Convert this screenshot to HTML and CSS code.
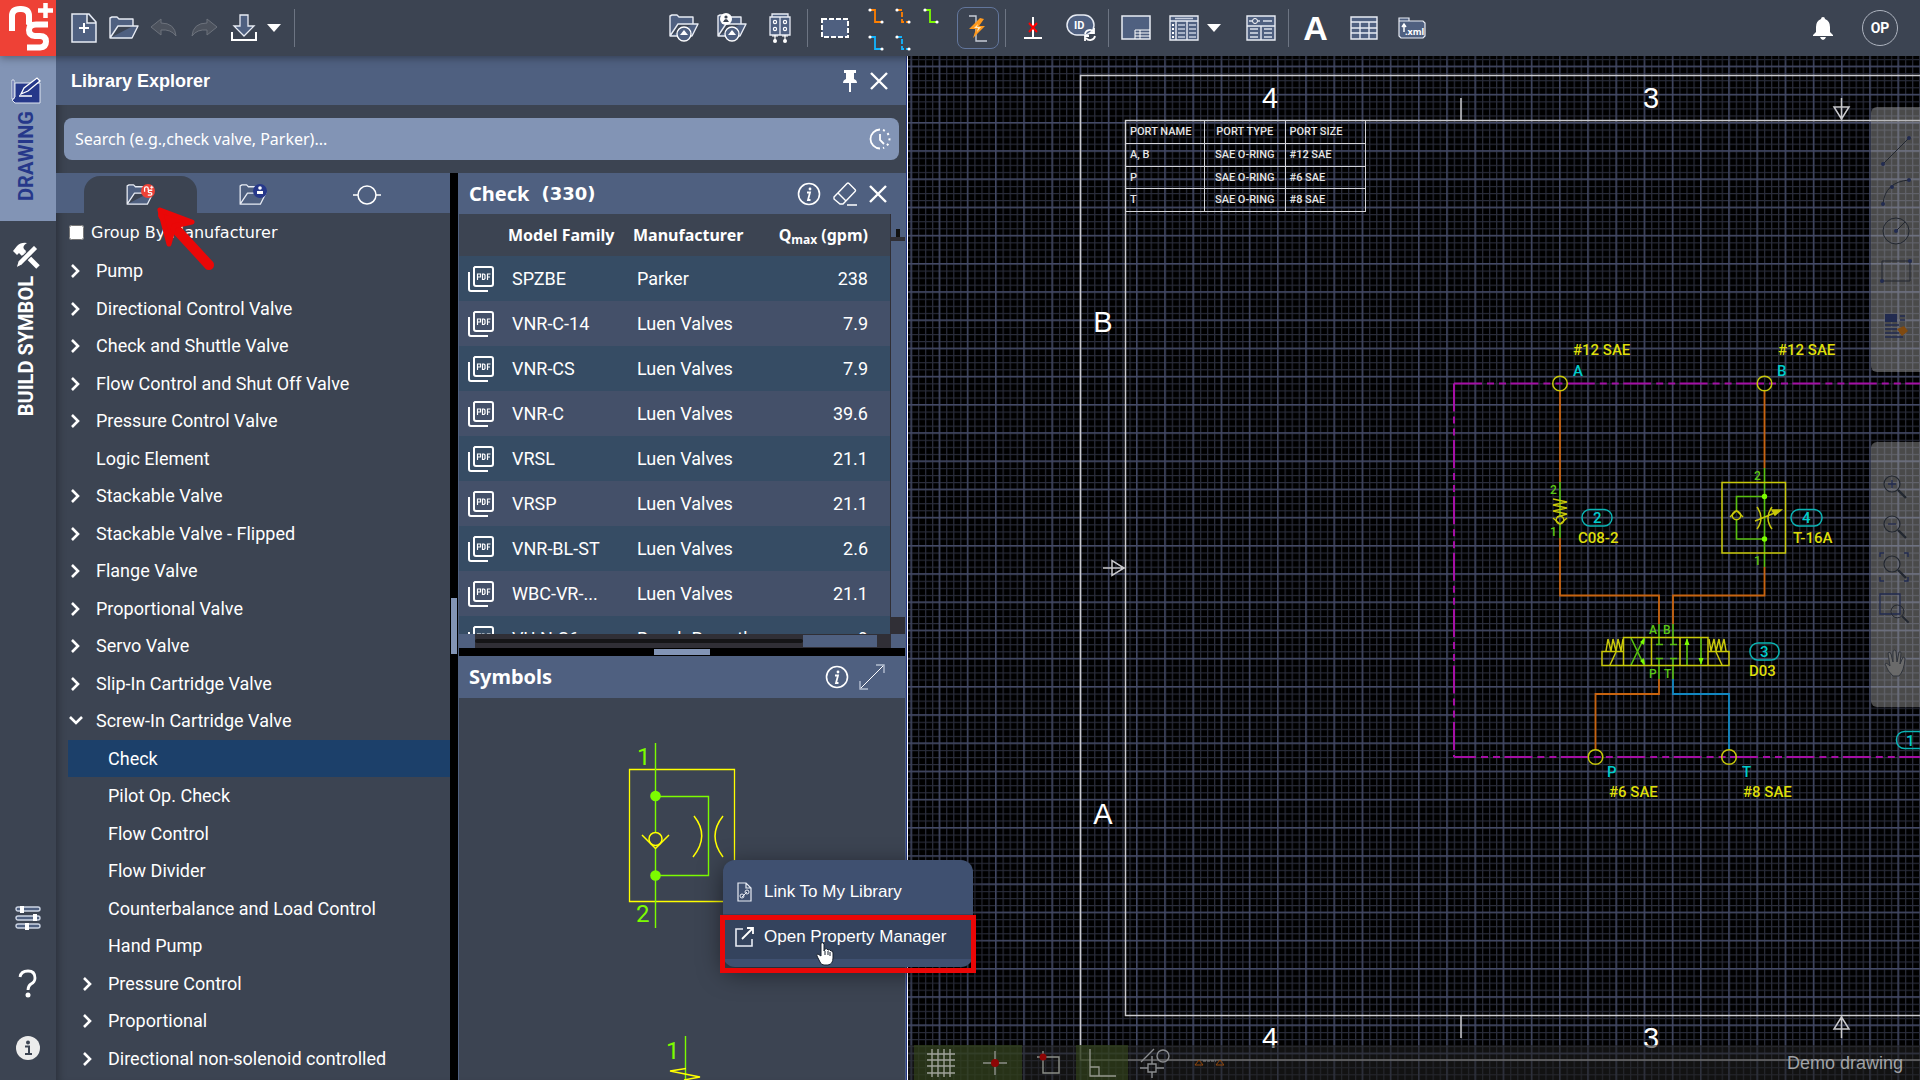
FILE: index.html
```html
<!DOCTYPE html>
<html lang="en">
<head>
<meta charset="utf-8">
<title>Library Explorer</title>
<link rel="stylesheet" href="styles.css">
</head>
<body>
<svg class="defs" aria-hidden="true">
  <symbol id="folder" viewBox="0 0 30 24"><path d="M1 22V2l2-1h5l2 2h14v7H9L1 22h22l6-12h-5" fill="#4f6080" stroke="#e8ecf4" stroke-width="1.4" stroke-linejoin="round"/></symbol>
  <symbol id="chev" viewBox="0 0 10 16"><path d="M1 2l6 6-6 6" fill="none" stroke="#fff" stroke-width="2.6"/></symbol>
  <symbol id="chevdown" viewBox="0 0 16 10"><path d="M2 1l6 6 6-6" fill="none" stroke="#fff" stroke-width="2.6"/></symbol>
  <symbol id="close" viewBox="0 0 18 18"><path d="M1 1l16 16M17 1L1 17" stroke="#fff" stroke-width="2.4"/></symbol>
  <symbol id="info" viewBox="0 0 24 24"><circle cx="12" cy="12" r="10.5" fill="none" stroke="#fff" stroke-width="1.6"/><circle cx="13" cy="7" r="1.4" fill="#fff"/><path d="M10 10.500h3l-2 7.500h2.500" fill="none" stroke="#fff" stroke-width="1.800"/></symbol>
  <symbol id="pdf" viewBox="0 0 26 26"><path d="M7 1h16q2 0 2 2v15q0 2-2 2H8q-2 0-2-2V2zM1 6v17q0 2 2 2h17" fill="none" stroke="#fff" stroke-width="2"/><path d="M9.500 14V8h3v3h-3M14.500 8v5.500h1.500l1-1V9l-1-1zM19.500 14V8h3M19.500 11h2.500" fill="none" stroke="#fff" stroke-width="1.200"/></symbol>
  <symbol id="caret" viewBox="0 0 14 8"><path d="M0 0h14L7 8z" fill="#fff"/></symbol>
  <symbol id="ns" viewBox="0 0 56 56"><g fill="none" stroke="#fff" stroke-width="6"><path d="M12 31V16q0-7 8-7h1q8 0 8 7v7q0 2-1 3"/><path d="M48 24.500H36q-7 0-7 5.500t6 6h5q6 0 6 5.500t-6 6H27"/><path d="M45.500 3v15M38 10.500h15" stroke-width="4.500"/></g></symbol>
  <symbol id="lens" viewBox="0 0 30 30"><circle cx="13" cy="13" r="8" fill="none" stroke="#222730" stroke-width="1.200"/><path d="M19 19l8 8" stroke="#222730" stroke-width="2.400"/></symbol>
</svg>

<header class="topbar">
  <a class="logo" href="#" aria-label="Home"><svg width="56" height="56"><use href="#ns"/></svg></a>
  <div class="tools">
    <div class="group">
      <button class="tool" aria-label="New"><svg width="26" height="32"><path d="M1 2h17l7 8v20H1zM16 2v9h9" fill="#4f6080" stroke="#e8ecf4" stroke-width="1.500"/><path d="M13 11v10M8 16h10" stroke="#fff" stroke-width="2"/></svg></button>
      <button class="tool" aria-label="Open"><svg width="30" height="24"><use href="#folder"/></svg></button>
      <button class="tool" aria-label="Undo"><svg width="28" height="20"><path d="M1 9L11 1v4q14 0 15 13q-5-7-15-6v5z" fill="#4c525d" stroke="#6c727c"/></svg></button>
      <button class="tool" aria-label="Redo"><svg width="28" height="20"><path d="M27 9L17 1v4Q3 5 2 18q5-7 15-6v5z" fill="#4c525d" stroke="#6c727c"/></svg></button>
      <button class="tool" aria-label="Save"><svg width="26" height="28"><path d="M9 1h8v11h6L13 22 3 12h6z" fill="#4f6080" stroke="#e8ecf4" stroke-width="1.300"/><path d="M1 18v8h24v-8" fill="none" stroke="#fff" stroke-width="2"/></svg></button>
      <button class="drop" aria-label="Save options"><svg width="14" height="8"><use href="#caret"/></svg></button>
      <span class="sep"></span>
    </div>
    <div class="group center">
      <button class="tool wide" aria-label="Load library"><svg width="30" height="30"><use href="#folder" width="30" height="24" y="1"/><circle cx="15" cy="21" r="7" fill="#4f6080" stroke="#fff" stroke-width="1.300"/><path d="M11 22l4-5 4 5z" fill="#fff"/></svg></button>
      <button class="tool wide" aria-label="Load my library"><svg width="30" height="30"><use href="#folder" width="30" height="24" y="1"/><circle cx="9" cy="6" r="6" fill="#fff"/><circle cx="9" cy="4" r="1.600" fill="#3c4452"/><path d="M6 9q3-6 6 0z" fill="#3c4452"/><circle cx="15" cy="21" r="7" fill="#4f6080" stroke="#fff" stroke-width="1.300"/><path d="M11 22l4-5 4 5z" fill="#fff"/></svg></button>
      <button class="tool wide" aria-label="Manifold"><svg width="22" height="32"><path d="M1 5h20v18H1zM11 5v18M3 2h16v3H3z" fill="#4f6080" stroke="#e8ecf4" stroke-width="1.300"/><g fill="none" stroke="#fff" stroke-width="1.200"><circle cx="6" cy="10" r="1.600"/><circle cx="16" cy="10" r="1.600"/><circle cx="6" cy="17" r="1.600"/><circle cx="16" cy="17" r="1.600"/><path d="M3 24h6M13 24h6M6 23v7M16 23v7"/></g><circle cx="6" cy="29" r="2" fill="#fff"/><circle cx="16" cy="29" r="2" fill="#fff"/></svg></button>
      <span class="sep"></span>
      <button class="tool wide" aria-label="Select area"><svg width="28" height="20"><rect x="1" y="1" width="26" height="18" fill="#4f6080" stroke="#fff" stroke-width="2" stroke-dasharray="5 2"/></svg></button>
      <button class="wires" aria-label="Line types"><svg width="76" height="46" fill="none" stroke-width="1.800"><g stroke="#ff8000"><path d="M3 5h5v12h7"/><path d="M30 5h5v12h7" stroke-dasharray="5 2"/></g><path d="M58 5h5v12h7" stroke="#7cfc00"/><g stroke="#12b5ff"><path d="M3 32h5v12h7"/><path d="M30 32h5v12h7" stroke-dasharray="5 2"/></g><g fill="#fff"><circle cx="3" cy="5" r="1.600"/><circle cx="15" cy="17" r="1.600"/><circle cx="30" cy="5" r="1.600"/><circle cx="42" cy="17" r="1.600"/><circle cx="58" cy="5" r="1.600"/><circle cx="70" cy="17" r="1.600"/><circle cx="3" cy="32" r="1.600"/><circle cx="15" cy="44" r="1.600"/><circle cx="30" cy="32" r="1.600"/><circle cx="42" cy="44" r="1.600"/></g></svg></button>
      <button class="flash" aria-label="Auto route"><svg width="24" height="28"><path d="M3 2h7v25h11" fill="none" stroke="#c6ccd6" stroke-width="1.400"/><path d="M14 4L3 15h7L7 24l12-12h-6l5-7z" fill="#ff9a1e"/><path d="M12 10l-4 4h4l-1 4 4-5h-4z" fill="#ffe9c0"/></svg></button>
      <span class="sep"></span>
      <button class="tool wide" aria-label="Delete port"><svg width="20" height="24"><path d="M10 1v20M1 22h18" stroke="#fff" stroke-width="2"/><path d="M6 7l8 9M14 7l-8 9" stroke="#f00" stroke-width="2"/></svg></button>
      <button class="tool wide" aria-label="Update ID"><svg width="30" height="28"><rect x="1" y="1" width="27" height="20" rx="10" fill="#4f6080" stroke="#e8ecf4" stroke-width="1.500"/><text x="8" y="15" class="id">ID</text><path d="M19 20a5 5 0 0 1 9-2M29 22a5 5 0 0 1-9 2M28 14v5h-4M19 27v-5h4" fill="none" stroke="#fff" stroke-width="1.800"/></svg></button>
      <span class="sep"></span>
      <button class="tool wide" aria-label="Title block"><svg width="30" height="26"><path d="M1 1h28v23H1z" fill="#4f6080" stroke="#e8ecf4" stroke-width="1.500"/><path d="M14 24v-9h15M14 18h15M14 21h15M19 15v9" fill="none" stroke="#fff"/></svg></button>
      <button class="tool wide" aria-label="Bill of materials"><svg width="30" height="26"><path d="M1 1h28v24H1zM1 6h28M7 6v19M18 6v19" fill="#4f6080" stroke="#e8ecf4" stroke-width="1.400"/><path d="M6 3.500h18M9 10h7M9 14h7M9 18h7M9 22h7M20 10h7M20 14h7M20 18h7M20 22h7" stroke="#c5cddd" stroke-width="1.500"/><path d="M4 9v14" stroke="#fff" stroke-width="2" stroke-dasharray="2 2"/></svg></button>
      <button class="drop" aria-label="Bill options"><svg width="14" height="8"><use href="#caret"/></svg></button>
      <button class="tool form" aria-label="Properties"><svg width="30" height="26"><path d="M1 1h28v24H1zM1 11h28M15 11v14" fill="#4f6080" stroke="#e8ecf4" stroke-width="1.400"/><path d="M3 6h3M12 6h2M17 6h9M4 14h8M4 18h8M4 22h8M18 14h8M18 18h8M18 22h8" stroke="#dbe1ec" stroke-width="1.400"/><circle cx="9" cy="6" r="2.500" fill="none" stroke="#fff"/></svg></button>
      <span class="sep"></span>
      <button class="tool wide letter" aria-label="Text">A</button>
      <button class="tool wide" aria-label="Table"><svg width="28" height="24"><path d="M1 1h26v22H1zM1 6h26M1 12h26M1 17h26M10 6v17M19 6v17" fill="#4f6080" stroke="#e8ecf4" stroke-width="1.400"/></svg></button>
      <button class="tool wide" aria-label="XML"><svg width="28" height="22"><path d="M1 19V1h10v3h14l2 2v13l-2 2H3zM1 4h10" fill="#4f6080" stroke="#e8ecf4" stroke-width="1.200"/><path d="M6 15V8M4 10l2-3 2 3" stroke="#fff" fill="none" stroke-width="1.500"/><text x="7" y="18" class="xml">.xml</text></svg></button>
    </div>
    <div class="group account">
      <button class="tool" aria-label="Notifications"><svg width="22" height="24"><path d="M11 1q2 0 2 2q5 2 5 8v5l3 3v1H1v-1l3-3v-5q0-6 5-8q0-2 2-2zM8 21h6q-1 3-3 3t-3-3z" fill="#fff"/></svg></button>
      <button class="avatar">OP</button>
    </div>
  </div>
</header>

<div class="body">
  <nav class="rail">
    <a class="mode active" href="#"><svg width="32" height="28"><path d="M2 3h2v19H2zM5 6h25v20H5l-3-3 3-3z" fill="#26388a" stroke="#dfe5f2" stroke-width="1"/><path d="M11 17l3-6L27 1l3 3-12 10zM9 19h13" fill="#26388a" stroke="#fff" stroke-width="1.300"/></svg><span>DRAWING</span></a>
    <a class="mode" href="#"><svg width="28" height="28"><path d="M1 9l4-5q4-4 10-3q-5 3-3 6l2 2-4 5-3-3-2 2z" fill="#fff"/><path d="M12 11l14 14" stroke="#fff" stroke-width="5"/><path d="M4 26l2-7L22 3l4 4L10 23z" fill="#fff" stroke="#3c4452" stroke-width="1.200"/></svg><span>BUILD SYMBOL</span></a>
    <div class="railend">
      <button aria-label="Settings"><svg width="26" height="26"><g fill="#4f6080" stroke="#cdd5e4" stroke-width="1.400"><rect x="1" y="2" width="24" height="4" rx="2"/><rect x="1" y="11" width="24" height="4" rx="2"/><rect x="1" y="19" width="24" height="4" rx="2"/></g><path d="M7 1v7M20 9v7M12 18v7" stroke="#fff" stroke-width="4"/></svg></button>
      <button aria-label="Help"><svg width="20" height="30"><path d="M2 8q1-6 8-6 7 0 7 7 0 4-4 6-3 2-3 6" fill="none" stroke="#fff" stroke-width="2.800"/><circle cx="10" cy="26" r="2.500" fill="#fff"/></svg></button>
      <button aria-label="About"><svg width="24" height="24"><circle cx="12" cy="12" r="12" fill="#ececec"/><circle cx="12" cy="6.500" r="2" fill="#3c4452"/><path d="M9 10.500h4V18M9 18h7" fill="none" stroke="#3c4452" stroke-width="2"/></svg></button>
    </div>
  </nav>

  <section class="explorer">
    <div class="titlebar"><h1>Library Explorer</h1>
      <button aria-label="Pin"><svg width="16" height="22"><path d="M2 0h12v3h-2v6q3 1 3 4H1q0-3 3-4V3H2zM7 13h2v9H7z" fill="#fff"/></svg></button>
      <button aria-label="Close explorer"><svg width="18" height="18"><use href="#close"/></svg></button>
    </div>
    <div class="search"><input type="text" aria-label="Search library" placeholder="Search (e.g.,check valve, Parker)..."><button aria-label="Search history"><svg width="22" height="22"><path d="M11 1.500a9.500 9.500 0 0 0 0 19M11 6v6l4 4" fill="none" stroke="#fff" stroke-width="1.800"/><path d="M14 2a9.500 9.500 0 0 1 0 18" fill="none" stroke="#fff" stroke-width="2" stroke-dasharray="2 3.500"/></svg></button></div>
    <div class="split">
      <div class="left">
        <div class="tabs">
          <button class="tab on" aria-label="Library"><svg width="32" height="24"><use href="#folder" width="30" height="22" y="1"/><circle cx="23" cy="8" r="7" fill="#ee4136"/><use href="#ns" x="17" y="2" width="12" height="12"/></svg></button>
          <button class="tab" aria-label="My library"><svg width="32" height="24"><use href="#folder" width="30" height="22" y="1"/><circle cx="22" cy="8" r="7" fill="#26388a"/><circle cx="22" cy="5" r="1.800" fill="#fff"/><path d="M19 11V8h6v3z" fill="#fff"/></svg></button>
          <button class="tab" aria-label="Components"><svg width="30" height="20"><circle cx="15" cy="10" r="9" fill="none" stroke="#fff" stroke-width="1.500"/><path d="M1 10h5M24 10h5" stroke="#fff" stroke-width="1.500"/></svg></button>
        </div>
        <label class="groupby"><input type="checkbox"> Group By Manufacturer</label>
        <ul class="tree">
          <li><button><svg><use href="#chev"/></svg>Pump</button></li>
          <li><button><svg><use href="#chev"/></svg>Directional Control Valve</button></li>
          <li><button><svg><use href="#chev"/></svg>Check and Shuttle Valve</button></li>
          <li><button><svg><use href="#chev"/></svg>Flow Control and Shut Off Valve</button></li>
          <li><button><svg><use href="#chev"/></svg>Pressure Control Valve</button></li>
          <li><button><svg></svg>Logic Element</button></li>
          <li><button><svg><use href="#chev"/></svg>Stackable Valve</button></li>
          <li><button><svg><use href="#chev"/></svg>Stackable Valve - Flipped</button></li>
          <li><button><svg><use href="#chev"/></svg>Flange Valve</button></li>
          <li><button><svg><use href="#chev"/></svg>Proportional Valve</button></li>
          <li><button><svg><use href="#chev"/></svg>Servo Valve</button></li>
          <li><button><svg><use href="#chev"/></svg>Slip-In Cartridge Valve</button></li>
          <li><button><svg><use href="#chevdown"/></svg>Screw-In Cartridge Valve</button></li>
          <li class="sub picked"><button><svg></svg>Check</button></li>
          <li class="sub"><button><svg></svg>Pilot Op. Check</button></li>
          <li class="sub"><button><svg></svg>Flow Control</button></li>
          <li class="sub"><button><svg></svg>Flow Divider</button></li>
          <li class="sub"><button><svg></svg>Counterbalance and Load Control</button></li>
          <li class="sub"><button><svg></svg>Hand Pump</button></li>
          <li class="sub"><button><svg><use href="#chev"/></svg>Pressure Control</button></li>
          <li class="sub"><button><svg><use href="#chev"/></svg>Proportional</button></li>
          <li class="sub"><button><svg><use href="#chev"/></svg>Directional non-solenoid controlled</button></li>
        </ul>
      </div>
      <div class="vsplit"><i></i></div>
      <div class="right">
        <div class="subhead"><h2>Check</h2><b class="count">(330)</b>
          <button aria-label="Information"><svg width="24" height="24"><use href="#info"/></svg></button>
          <button aria-label="Clear filters"><svg width="24" height="24"><path d="M1 15L14 1.500q1-1 2 0l6 6q1 1 0 2L10 22H7L1 17zM5 11l8 8M14 23h10" fill="none" stroke="#fff" stroke-width="1.400"/></svg></button>
          <button aria-label="Close list"><svg width="18" height="18"><use href="#close"/></svg></button>
        </div>
        <div class="grid">
          <div class="rows">
            <table class="models">
              <colgroup><col class="c1"><col class="c2"><col class="c3"><col></colgroup>
              <thead><tr><th></th><th>Model Family</th><th>Manufacturer</th><th class="num">Q<small>max</small> (gpm)</th></tr></thead>
              <tbody>
                <tr><td><svg><use href="#pdf"/></svg></td><td>SPZBE</td><td>Parker</td><td class="num">238</td></tr>
                <tr><td><svg><use href="#pdf"/></svg></td><td>VNR-C-14</td><td>Luen Valves</td><td class="num">7.9</td></tr>
                <tr><td><svg><use href="#pdf"/></svg></td><td>VNR-CS</td><td>Luen Valves</td><td class="num">7.9</td></tr>
                <tr><td><svg><use href="#pdf"/></svg></td><td>VNR-C</td><td>Luen Valves</td><td class="num">39.6</td></tr>
                <tr><td><svg><use href="#pdf"/></svg></td><td>VRSL</td><td>Luen Valves</td><td class="num">21.1</td></tr>
                <tr><td><svg><use href="#pdf"/></svg></td><td>VRSP</td><td>Luen Valves</td><td class="num">21.1</td></tr>
                <tr><td><svg><use href="#pdf"/></svg></td><td>VNR-BL-ST</td><td>Luen Valves</td><td class="num">2.6</td></tr>
                <tr><td><svg><use href="#pdf"/></svg></td><td>WBC-VR-...</td><td>Luen Valves</td><td class="num">21.1</td></tr>
                <tr><td><svg><use href="#pdf"/></svg></td><td>VU-N-S6</td><td>Bosch Rexroth</td><td class="num">9</td></tr>
              </tbody>
            </table>
          </div>
          <div class="vbar"><i class="cap"></i><i class="thumb"></i></div>
          <div class="hbar"><i class="cap"></i><i class="track"></i><i class="thumb"></i></div>
          <div class="corner"></div>
        </div>
        <div class="hsplit"><i></i></div>
        <div class="subhead symbols"><h2>Symbols</h2>
          <button aria-label="Symbol information"><svg width="24" height="24"><use href="#info"/></svg></button>
          <button aria-label="Expand"><svg width="26" height="26"><path d="M1 25L25 1" stroke="#fff"/><path d="M17 1h8v8M1 17v8h8" fill="none" stroke="#b4bed0" stroke-width="1.400"/></svg></button>
        </div>
        <svg class="preview" viewBox="459 698 446 382" preserveAspectRatio="xMidYMin slice" fill="none">
          <path d="M629.500 769.500h105v132h-105z" stroke="#ff0" stroke-width="1.300"/>
          <path d="M655.500 743v90M655.500 848v80M655.500 796.500h53v79h-53" stroke="#7cfc00" stroke-width="1.400"/>
          <circle cx="655.500" cy="796" r="5.300" fill="#7cfc00"/><circle cx="655.500" cy="875.500" r="5.300" fill="#7cfc00"/>
          <g stroke="#ff0" stroke-width="1.500"><circle cx="655.500" cy="839" r="6.500"/><path d="M642 835l13.500 13.500L669 835M694 816q16 20-1 41M723 816q-16 20 0 41"/></g>
          <text x="637" y="765" class="pin">1</text><text x="636" y="922" class="pin">2</text><text x="666" y="1059" class="pin">1</text>
          <path d="M685.500 1036v44" stroke="#7cfc00" stroke-width="1.400"/><path d="M686 1068.500l-16 2.500 30 6-16 3" stroke="#ff0" stroke-width="1.400"/>
        </svg>
      </div>
    </div>
  </section>

  <main class="canvas">
    <svg class="sheet" viewBox="908 56 1012 1024" preserveAspectRatio="xMinYMin slice" fill="none">
      <defs>
        <pattern id="minor" x="1108.300" y="94.300" width="7.050" height="7.050" patternUnits="userSpaceOnUse"><path d="M0 .6h7.050M.6 0v7.050" stroke="#2a2d3b" stroke-width="1.200"/></pattern>
        <pattern id="major" x="1107.800" y="93.800" width="28.200" height="28.200" patternUnits="userSpaceOnUse"><path d="M0 .7h28.200M.7 0v28.200" stroke="#434966" stroke-width="1.300"/></pattern>
      </defs>
      <rect x="908" y="56" width="2600" height="1600" fill="url(#minor)"/>
      <rect x="908" y="56" width="2600" height="1600" fill="url(#major)"/>
      <g stroke="#c9c9cd" stroke-width="1.500">
        <path d="M3500 75.500H1080.500v984.500H3500M3500 120.500H1125.500v895H3500M1461 98v22M1461 1016v22"/>
        <path d="M1841.500 98v22M1834 107h15l-7.500 12zM1841.500 1038v-22M1834 1029h15l-7.500-12zM1103 568h22M1112 560.500v15l12-7.500z"/>
      </g>
      <g class="zone"><text x="1270" y="108">4</text><text x="1651" y="108">3</text><text x="1270" y="1048">4</text><text x="1651" y="1048">3</text><text x="1103" y="332">B</text><text x="1103" y="824">A</text></g>
      <g stroke="#a50fa5" stroke-width="2" stroke-dasharray="28 5 7 5 7 4.400"><path d="M1454 383.500H3500M1454 383.500V757"/><path d="M1454 757H3500" stroke-dashoffset="6"/></g>
      <g stroke="#c8640f" stroke-width="1.800"><path d="M1560 391v91M1560 538v57.500h99V624M1764.500 391v77M1764.500 567v28.500H1673V624M1659 679v15h-63.500v56"/></g>
      <path d="M1673 679v15h56v56" stroke="#1287c0" stroke-width="1.800"/>
      <g stroke="#58c010" stroke-width="1.600"><path d="M1560 482v34M1560 524v14M1764.500 468v99M1764.500 496.500h-28V510M1736.500 520v19h28"/><path d="M1659 624v20M1656 644.500h7M1673 624v20M1670 644.500h7M1659 679v-21M1656 658.500h7M1673 679v-21M1670 658.500h7M1631 638l13 27M1631 665l13-27M1687 665v-26M1701 638v26"/></g>
      <g fill="#7cfc00"><circle cx="1764.500" cy="496.500" r="2.700"/><circle cx="1764.500" cy="539" r="2.700"/><path d="M1687 638l-2.500 7h5zM1701 665l-2.500-7h5zM1645 638l-5 4 4 3zM1645 665l-5-4 4-3z"/></g>
      <g stroke="#c8c80a" stroke-width="1.500">
        <circle cx="1560" cy="383.500" r="7.300"/><circle cx="1764.500" cy="383.500" r="7.300"/><circle cx="1595.500" cy="757" r="7.300"/><circle cx="1729" cy="757" r="7.300"/>
        <path d="M1553 499l14 3-14 3 14 3-14 3 14 3-10 3M1553 518l7 6 7-6"/><circle cx="1560" cy="520" r="3.800"/>
        <path d="M1722 482.500h63.500v70.500H1722zM1730 517l6.500-6.500 6.500 6.500"/><circle cx="1736.500" cy="515.500" r="4.200"/>
        <path d="M1757 507q8 11 0 22M1772 507q-8 11 0 22M1755 521l22-9"/><path d="M1781 510l-9 0 3 5z" fill="#c8c80a"/>
        <path d="M1623.500 637.500h84.500v28h-84.500zM1651.500 637.500v28M1680 637.500v28M1623.500 651.500H1602v14h21.500M1708 651.500h21v14h-21M1610 665l6-13M1716 652l6 13"/>
        <path d="M1606 651l2-12 3 12 2-12 3 12 2-12 3 12 2-12M1709 639l2 12 3-12 2 12 3-12 2 12 3-12 2 12"/>
      </g>
      <g stroke="#0ab4b4" stroke-width="1.500"><rect x="1582" y="509.500" width="30" height="16.500" rx="8"/><rect x="1791" y="509.500" width="31" height="16.500" rx="8"/><rect x="1750" y="643" width="29" height="17" rx="8"/><rect x="1896.500" y="731.500" width="30" height="17" rx="8"/></g>
      <g class="tag cy"><text x="1573" y="376">A</text><text x="1777" y="376">B</text><text x="1607" y="777">P</text><text x="1742" y="777">T</text><text x="1593" y="523">2</text><text x="1802" y="523">4</text><text x="1760" y="657">3</text><text x="1906" y="746">1</text></g>
      <g class="tag ye"><text x="1573" y="355">#12 SAE</text><text x="1778" y="355">#12 SAE</text><text x="1578" y="543">C08-2</text><text x="1793" y="543">T-16A</text><text x="1749" y="676">D03</text><text x="1609" y="797">#6 SAE</text><text x="1743" y="797">#8 SAE</text></g>
      <g class="tag gr"><text x="1550" y="494">2</text><text x="1550" y="536">1</text><text x="1754" y="480">2</text><text x="1754" y="565">1</text><text x="1649" y="634">A</text><text x="1663" y="634">B</text><text x="1649" y="678">P</text><text x="1664" y="678">T</text></g>
    </svg>
    <table class="ports">
      <thead><tr><th>PORT NAME</th><th class="mid">PORT TYPE</th><th>PORT SIZE</th></tr></thead>
      <tbody>
        <tr><td>A, B</td><td class="mid">SAE O-RING</td><td>#12 SAE</td></tr>
        <tr><td>P</td><td class="mid">SAE O-RING</td><td>#6 SAE</td></tr>
        <tr><td>T</td><td class="mid">SAE O-RING</td><td>#8 SAE</td></tr>
      </tbody>
    </table>
    <div class="palette draw">
      <button aria-label="Line"><svg width="34" height="34"><path d="M4 30L30 4" stroke="#222730"/><circle cx="4" cy="30" r="2" fill="#222b50"/><circle cx="30" cy="4" r="2" fill="#222b50"/></svg></button>
      <button aria-label="Arc"><svg width="34" height="34" fill="none"><path d="M4 30Q6 8 30 6" stroke="#222730"/><circle cx="4" cy="30" r="2" fill="#222b50"/><circle cx="13" cy="13" r="2" fill="#222b50"/><circle cx="30" cy="6" r="2" fill="#222b50"/></svg></button>
      <button aria-label="Circle"><svg width="34" height="34" fill="none"><circle cx="17" cy="17" r="13" stroke="#222730"/><path d="M17 17l9-9" stroke="#222730"/><circle cx="17" cy="17" r="2" fill="#222b50"/></svg></button>
      <button aria-label="Rectangle"><svg width="34" height="34" fill="none"><path d="M3 7h28v20H3z" stroke="#222730"/><circle cx="3" cy="27" r="2" fill="#222b50"/><circle cx="31" cy="7" r="2" fill="#222b50"/></svg></button>
      <button class="gap" aria-label="Format"><svg width="34" height="34" fill="none"><path d="M6 5h12v8H6z" fill="#222b50"/><path d="M6 16h14M6 20h12M6 24h14M6 28h18M21 7h5M21 11h5" stroke="#222b50" stroke-width="1.500"/><path d="M18 20l7-3 4 5-6 5z" fill="#804a10"/></svg></button>
    </div>
    <div class="palette zoom">
      <button aria-label="Zoom in"><svg width="34" height="34"><use href="#lens" width="30" height="30"/><path d="M9 13h8M13 9v8" stroke="#222b50" stroke-width="1.300"/></svg></button>
      <button aria-label="Zoom out"><svg width="34" height="34"><use href="#lens" width="30" height="30"/><path d="M9 13h8" stroke="#222b50" stroke-width="1.300"/></svg></button>
      <button aria-label="Zoom to fit"><svg width="34" height="34"><use href="#lens" width="30" height="30"/><path d="M1 6V2h4M25 2h4v4M1 26v4h4M25 30h4v-4" fill="none" stroke="#222b50" stroke-width="1.400"/></svg></button>
      <button aria-label="Zoom area"><svg width="34" height="34"><path d="M1 3h20v20H1z" fill="none" stroke="#222b50" stroke-width="1.300"/><use href="#lens" x="8" y="10" width="24" height="24"/></svg></button>
      <button class="gap" aria-label="Pan"><svg width="26" height="30"><path d="M10 28Q5 24 2 16q1-2 5 2L5 5q2-2 3 1l2 8V3q2-2 3 0l1 11 2-10q2-1 2 1l-1 11 3-7q2 0 2 2-1 12-6 17z" fill="#6a6a6a" stroke="#30343c"/></svg></button>
    </div>
    <div class="status">
      <button class="on grid-tile" aria-label="Grid"><svg width="28" height="28"><path d="M0 5h28M0 11h28M0 17h28M0 24h28M5 0v28M11 0v28M17 0v28M23 0v28" stroke="#a0a39a" stroke-width="1.400"/></svg></button>
      <button class="on snap-tile" aria-label="Snap"><svg width="24" height="24"><path d="M0 12h24M12 0v24" stroke="#8c8f88" stroke-width="1.400"/><circle cx="12" cy="12" r="4" fill="#8e0505"/></svg></button>
      <button class="origin-tile" aria-label="Origin"><svg width="24" height="24"><path d="M0 6h22v16H6V0" fill="none" stroke="#8c8f88" stroke-width="1.400"/><circle cx="6" cy="6" r="3.500" fill="#8e0505"/></svg></button>
      <button class="on ortho-tile" aria-label="Ortho"><svg width="28" height="28"><path d="M2 0v27h26M2 18h9v9" fill="none" stroke="#96998f" stroke-width="1.300"/></svg></button>
      <button class="object-tile" aria-label="Object snap"><svg width="30" height="30" fill="none" stroke="#8b8d90" stroke-width="1.400"><path d="M1 14L14 1M0 20h8M16 20h8M12 8v8M12 24v6M8 16h8v8H8z"/><circle cx="23" cy="8" r="6"/></svg></button>
      <button class="connect-tile" aria-label="Connections"><svg width="30" height="10"><path d="M1 7l4-5 4 5zM22 7l4-5 4 5z" fill="none" stroke="#93480c"/><path d="M9 3h13" stroke="#888" stroke-dasharray="3 1"/></svg></button>
      <span>Demo drawing</span>
    </div>
  </main>
</div>

<div class="menu" role="menu">
  <button role="menuitem"><svg width="20" height="20"><path d="M3 1h8l5 5v13H3zM11 1v5h5" fill="none" stroke="#e8ecf4" stroke-width="1.200"/><path d="M7 15l5-5" stroke="#e8ecf4"/><circle cx="7" cy="14" r="2" fill="none" stroke="#e8ecf4"/><circle cx="12" cy="10" r="2" fill="none" stroke="#e8ecf4"/></svg>Link To My Library</button>
  <button class="hover" role="menuitem"><svg width="20" height="20"><path d="M8 2H1v17h16v-7" fill="none" stroke="#e8ecf4" stroke-width="1.600"/><path d="M7 12L18 1M12 1h6v6" fill="none" stroke="#fff" stroke-width="1.800"/></svg>Open Property Manager</button>
</div>
<div class="highlight"></div>
<svg class="cursor" width="18" height="24"><path d="M5 1q2-1 3 1v7l1-2q2-1 3 1 2-1 3 1 2-1 2 2v5q0 6-5 7H8q-3 0-4-3l-3-6q-1-2 1-2l3 2z" fill="#fff" stroke="#16202e"/><path d="M9 9v4M12 9v4M14 10v4" stroke="#16202e"/></svg>
<svg class="arrow" width="66" height="70"><path d="M12 12L58 62" stroke="#ea0707" stroke-width="10" stroke-linecap="round"/><path d="M9 7l32 12-18 4-5 18z" fill="#ea0707" stroke="#ea0707" stroke-width="5" stroke-linejoin="round"/></svg>
</body>
</html>
```
FILE: styles.css
```css
* { box-sizing: border-box; }
body {
  margin: 0;
  height: 100vh;
  display: flex;
  flex-direction: column;
  overflow: hidden;
  position: relative;
  background: #3c4452;
  color: #fff;
  font: 18px/24px Roboto, sans-serif;
}
button { border: 0; padding: 0; background: none; color: inherit; font: inherit; cursor: pointer; }
svg { display: block; flex: none; }
h1, h2 { margin: 0; }
.defs { position: absolute; width: 0; height: 0; }

/* top bar */
.topbar { display: flex; height: 56px; flex: none; background: #3c4452; box-shadow: 0 2px 8px rgba(0, 0, 0, .35); z-index: 2; }
.logo { width: 56px; background: #ee4136; }
.tools { flex: 1; display: flex; justify-content: space-between; padding: 0 22px 0 8px; }
.group { display: flex; align-items: center; }
.center { margin-right: 6px; }
.tool { width: 40px; height: 40px; display: grid; place-items: center; }
.tool.wide { width: 48px; }
.tool.form { width: 64px; padding-left: 16px; }
.drop { width: 20px; height: 40px; display: grid; place-items: center; margin-right: 7px; }
.wide + .drop { margin: 0 -3px 0 -4px; }
.sep { width: 1px; height: 38px; margin: 0 3px; background: #6d7583; }
.wires { width: 78px; height: 48px; margin: 0 13px 0 7px; display: grid; place-items: center; }
.flash { width: 42px; height: 42px; margin-right: 3px; border: 1px solid #62769c; border-radius: 8px; display: grid; place-items: center; }
.id { font: bold 11px Roboto, sans-serif; fill: #fff; }
.xml { font: bold 9px "Noto Sans", sans-serif; fill: #fff; }
.letter { font: bold 34px/40px "Liberation Sans", sans-serif; }
.account { gap: 19px; }
.avatar { width: 36px; height: 36px; border: 1px solid #aeb4bf; border-radius: 50%; font-size: 14px; font-weight: 700; }

.body { flex: 1; min-height: 0; display: flex; }

/* mode rail */
.rail { width: 56px; flex: none; display: flex; flex-direction: column; background: #3c4452; }
.mode { display: flex; flex-direction: column; align-items: center; gap: 6px; padding: 21px 5px 20px 0; color: #fff; text-decoration: none; font-weight: 700; font-size: 20px; }
.mode span { writing-mode: vertical-rl; transform: rotate(180deg); }
.mode.active { height: 165px; background: #8294b5; color: #26388a; }
.railend { margin-top: auto; display: flex; flex-direction: column; align-items: center; padding-bottom: 11px; }
.railend button { height: 66px; padding: 0 14px; display: grid; place-items: center; }
.railend button:last-child { padding: 10px 0 0; height: 52px; }

/* explorer */
.explorer { width: 852px; flex: none; display: flex; flex-direction: column; border-right: 1px solid #fff; box-shadow: inset -1px 0 #26388a, inset 8px 0 8px -6px rgba(0, 0, 0, .3); padding-right: 1px; }
.titlebar { height: 49px; flex: none; display: flex; align-items: center; gap: 12px; padding: 0 18px 0 15px; background: #4f6080; }
.titlebar h1 { flex: 1; font: bold 18px/24px "Liberation Sans", sans-serif; }
.search { height: 42px; flex: none; margin: 13px 7px 13px 8px; display: flex; align-items: center; padding-right: 8px; background: #8294b5; border-radius: 8px; }
.search input { flex: 1; height: 42px; padding: 0 11px; border: 0; background: none; color: #fff; font: 16px "Noto Sans", sans-serif; outline: 0; }
.search input::placeholder { color: #fff; opacity: 1; }
.split { flex: 1; min-height: 0; display: grid; grid-template-columns: 394px 8px minmax(0, 1fr); }
.left { display: flex; flex-direction: column; min-height: 0; }
.tabs { height: 40px; flex: none; display: flex; padding: 3px 0 0 28px; background: #4f6080; }
.tab { width: 113px; display: grid; place-items: center; }
.tab.on { background: #3c4452; border-radius: 16px 16px 0 0; }
.groupby { height: 39px; flex: none; display: flex; align-items: center; gap: 7px; padding-left: 13px; font: 16px/24px "DejaVu Sans", sans-serif; }
.groupby input { width: 15px; height: 15px; margin: 0; }
.tree { list-style: none; margin: 0; padding: 0 0 0 12px; overflow: hidden; }
.tree li { height: 38px; }
.tree li:nth-child(even) { height: 37px; }
.tree button { width: 100%; height: 100%; display: flex; align-items: center; gap: 12px; padding-left: 0; text-align: left; }
.tree svg { width: 16px; height: 16px; }
.tree .sub button { padding-left: 12px; }
.picked { background: #1c406a; }

.vsplit { background: #000; display: flex; flex-direction: column; align-items: center; padding-top: 425px; }
.vsplit i { width: 6px; height: 56px; background: #8294b5; }
.right { display: flex; flex-direction: column; min-height: 0; border: solid #4f6080; border-width: 0 1px; }
.subhead { height: 41px; flex: none; display: flex; align-items: center; gap: 12px; padding: 0 18px 0 10px; background: #4f6080; }
.subhead h2 { font: bold 20px/24px "Noto Sans", sans-serif; }
.count { flex: 1; font: bold 18px/24px "DejaVu Sans", sans-serif; }
.symbols { height: 42px; gap: 10px; padding-right: 20px; }
.symbols h2 { flex: 1; }
.grid { display: grid; grid-template: 420px 14px / minmax(0, 1fr) 15px; background: #302f36; }
.rows { overflow: hidden; }
.models { width: 100%; border-collapse: collapse; table-layout: fixed; }
.c1 { width: 44px; }
.c2 { width: 125px; }
.c3 { width: 132px; }
.models tr { height: 45px; }
.models thead tr { height: 42px; background: #3c4452; }
.models tbody tr:nth-child(odd) { background: #364c64; }
.models tbody tr:nth-child(even) { background: #445069; }
.models th { padding: 0 5px; text-align: left; font: bold 16px/24px "Noto Sans", sans-serif; }
.models td { padding: 0 9px; white-space: nowrap; }
.models .num { padding: 0 22px 0 0; text-align: right; }
.models small { font-size: 12px; vertical-align: -3px; line-height: 1; }
.models svg { width: 26px; height: 26px; }
.vbar { display: flex; flex-direction: column; padding-left: 1px; }
.vbar .cap { height: 23px; margin-bottom: 4px; background: linear-gradient(#111, #111) center bottom / 4px 8px no-repeat #4f6080; }
.vbar .thumb { height: 376px; background: #4f6080; }
.hbar { display: flex; align-items: center; padding-right: 13px; }
.hbar .cap { width: 16px; height: 14px; background: #4f6080; }
.hbar .track { flex: 1; height: 4px; background: #151517; border-radius: 2px; }
.hbar .thumb { width: 74px; height: 12px; background: #4f6080; }
.corner { background: #4f6080; margin-left: 1px; }
.hsplit { height: 8px; flex: none; display: flex; align-items: center; justify-content: center; background: #000; }
.hsplit i { width: 56px; height: 6px; background: #8294b5; }
.preview { flex: 1; min-height: 0; width: 100%; }
.pin { font: 24px Roboto, sans-serif; fill: #7cfc00; }

/* drawing */
.canvas { flex: 1; min-width: 0; position: relative; background: #000; overflow: hidden; }
.sheet { width: 100%; height: 100%; }
.zone { font: 29px "Liberation Sans", sans-serif; fill: #fff; text-anchor: middle; }
.tag { font: 500 15px Roboto, sans-serif; }
.cy { fill: #0cc; }
.ye { fill: #dede0a; }
.gr { fill: #5cc814; font-size: 12px; }
.ports { position: absolute; left: 217px; top: 64px; width: 241px; border-collapse: collapse; table-layout: fixed; font: 500 11px/14px Roboto, sans-serif; color: #e6e6e6; }
.ports th, .ports td { height: 22px; padding: 0 0 0 4px; border: 1px solid #d4d4d8; text-align: left; font-weight: 500; white-space: nowrap; }
.ports tr:nth-child(odd) > * { height: 23px; }
.ports th:first-child { width: 79px; }
.ports .mid { padding: 0; text-align: center; }
.palette { position: absolute; right: 0; width: 49px; background: rgba(165, 165, 165, .45); border-radius: 6px 0 0 6px; display: flex; flex-direction: column; align-items: center; }
.palette button { height: 40px; display: grid; place-items: center; }
.palette .gap { margin-top: 15px; }
.draw { top: 51px; height: 265px; padding-top: 24px; }
.zoom { top: 386px; height: 265px; padding-top: 26px; }
.status { position: absolute; left: 0; right: 0; bottom: 0; height: 35px; padding-left: 6px; display: flex; align-items: center; background: rgba(32, 32, 32, .55); }
.status button { width: 54px; height: 35px; display: grid; place-items: center; }
.status .on { background: rgba(54, 72, 26, .6); }
.status .ortho-tile { width: 52px; }
.status span { margin-left: auto; padding-right: 17px; color: #a0a2a6; font: 18px/24px "Liberation Sans", sans-serif; }

/* overlays */
.menu { position: absolute; z-index: 3; left: 723px; top: 860px; width: 250px; padding: 9px 0 8px; display: flex; flex-direction: column; background: #3f5070; border-radius: 12px; box-shadow: 0 6px 24px rgba(0, 0, 0, .5); font: 17px/24px "Liberation Sans", sans-serif; }
.menu button { height: 45px; display: flex; align-items: center; gap: 9px; padding-left: 12px; }
.menu .hover { background: #34435d; }
.highlight { position: absolute; z-index: 4; left: 720px; top: 915px; width: 256px; height: 58px; border: 5px solid #ea0707; }
.cursor { position: absolute; z-index: 5; left: 816px; top: 942px; }
.arrow { position: absolute; z-index: 3; left: 151px; top: 203px; }
```
